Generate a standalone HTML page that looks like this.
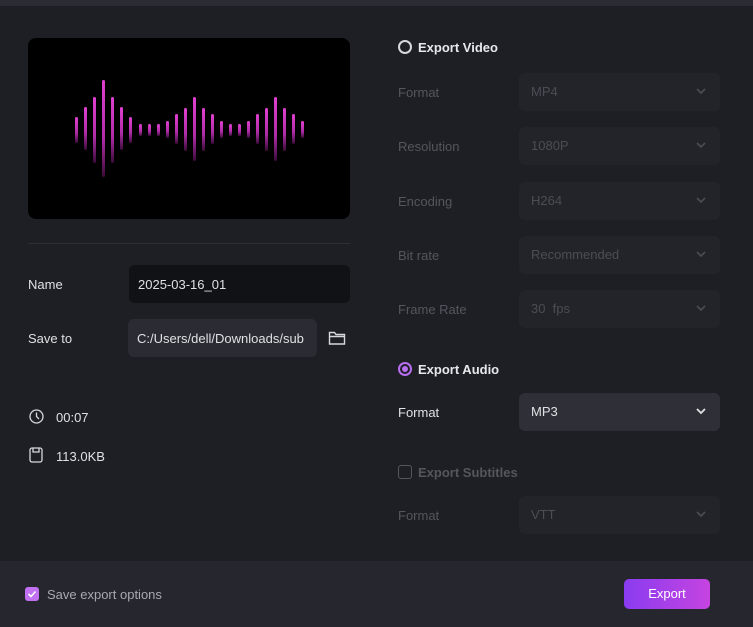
<!DOCTYPE html>
<html><head><meta charset="utf-8"><style>
*{margin:0;padding:0;box-sizing:border-box}
body{width:753px;height:627px;background:#1e1f25;font-family:"Liberation Sans",sans-serif;position:relative;overflow:hidden;color:#d8d8dc;font-size:13px}
.a{position:absolute}
.top{left:0;top:0;width:753px;height:6px;background:#2a2b33}
.prev{left:28px;top:38px;width:322px;height:181px;background:#000;border-radius:8px}
.bar{position:absolute;width:3px;border-radius:2px;background:linear-gradient(#e040d0,#b02ca8 60%,#3a0c38)}
.lbl{font-size:13px;color:#e0e0e4}
.dis{color:#55565d}
.dd{position:absolute;left:519px;width:201px;height:38px;border-radius:6px;background:#23242a;color:#4c4d54;padding:11px 12px;font-size:13px}
.dd svg{position:absolute;right:14px;top:15px}
.dd.on{background:#2f3037;color:#e0e0e4}
.radio{width:14px;height:14px;border-radius:50%;border:2px solid #d8d8dc}
.h{font-weight:bold;font-size:13px}
</style></head><body>
<div class="a top"></div>
<div class="a prev">
<div id="bars"></div>
</div>
<div class="a" style="left:28px;top:243px;width:322px;height:1px;background:#2e2f36"></div>
<div class="a lbl" style="left:28px;top:277px">Name</div>
<div class="a" style="left:129px;top:265px;width:221px;height:38px;background:#111215;border-radius:6px;padding:12px 9px;color:#e0e0e4">2025-03-16_01</div>
<div class="a lbl" style="left:28px;top:331px">Save to</div>
<div class="a" style="left:128px;top:319px;width:189px;height:38px;background:#2b2c33;border-radius:6px;padding:12px 9px;color:#e0e0e4;white-space:nowrap;overflow:hidden">C:/Users/dell/Downloads/sub</div>
<svg class="a" style="left:328px;top:330px" width="18" height="16" viewBox="0 0 18 16" fill="none" stroke="#d8d8dc" stroke-width="1.4"><path d="M1.5 2.5h5l1.5 2h8.5v9.5h-15z M1.5 6.5h15"/></svg>
<svg class="a" style="left:29px;top:409px" width="15" height="15" viewBox="0 0 15 15" fill="none" stroke="#d8d8dc" stroke-width="1.3"><circle cx="7.5" cy="7.5" r="6.5"/><path d="M7.5 3.5v4l2.5 2.5"/></svg>
<div class="a lbl" style="left:56px;top:410px">00:07</div>
<svg class="a" style="left:29px;top:447px" width="14" height="16" viewBox="0 0 14 16" fill="none" stroke="#d8d8dc" stroke-width="1.3"><rect x="1" y="1" width="12" height="14" rx="2"/><path d="M4 1v4h6V1"/></svg>
<div class="a lbl" style="left:56px;top:449px">113.0KB</div>

<div class="a radio" style="left:398px;top:40px"></div>
<div class="a h" style="left:418px;top:40px;color:#e8e8ec">Export Video</div>
<div class="a dis" style="left:398px;top:85px">Format</div>
<div class="dd" style="top:73px">MP4<svg width="10" height="7" viewBox="0 0 10 7"><path d="M1 1l4 4 4-4" stroke="#4c4d54" stroke-width="1.6" fill="none"/></svg></div>
<div class="a dis" style="left:398px;top:139px">Resolution</div>
<div class="dd" style="top:127px">1080P<svg width="10" height="7" viewBox="0 0 10 7"><path d="M1 1l4 4 4-4" stroke="#4c4d54" stroke-width="1.6" fill="none"/></svg></div>
<div class="a dis" style="left:398px;top:194px">Encoding</div>
<div class="dd" style="top:182px">H264<svg width="10" height="7" viewBox="0 0 10 7"><path d="M1 1l4 4 4-4" stroke="#4c4d54" stroke-width="1.6" fill="none"/></svg></div>
<div class="a dis" style="left:398px;top:248px">Bit rate</div>
<div class="dd" style="top:236px">Recommended<svg width="10" height="7" viewBox="0 0 10 7"><path d="M1 1l4 4 4-4" stroke="#4c4d54" stroke-width="1.6" fill="none"/></svg></div>
<div class="a dis" style="left:398px;top:302px">Frame Rate</div>
<div class="dd" style="top:290px">30&nbsp; fps<svg width="10" height="7" viewBox="0 0 10 7"><path d="M1 1l4 4 4-4" stroke="#4c4d54" stroke-width="1.6" fill="none"/></svg></div>

<div class="a radio" style="left:398px;top:362px;border-color:#b86ef0"><div style="position:absolute;left:2px;top:2px;width:6px;height:6px;border-radius:50%;background:#b86ef0"></div></div>
<div class="a h" style="left:418px;top:362px;color:#e8e8ec">Export Audio</div>
<div class="a lbl" style="left:398px;top:405px">Format</div>
<div class="dd on" style="top:393px">MP3<svg width="10" height="7" viewBox="0 0 10 7"><path d="M1 1l4 4 4-4" stroke="#e0e0e4" stroke-width="1.8" fill="none"/></svg></div>

<div class="a" style="left:398px;top:465px;width:14px;height:14px;border:1.5px solid #55565d;border-radius:3px"></div>
<div class="a h" style="left:418px;top:465px;color:#55565d">Export Subtitles</div>
<div class="a dis" style="left:398px;top:508px">Format</div>
<div class="dd" style="top:496px">VTT<svg width="10" height="7" viewBox="0 0 10 7"><path d="M1 1l4 4 4-4" stroke="#4c4d54" stroke-width="1.6" fill="none"/></svg></div>

<div class="a" style="left:0;top:561px;width:753px;height:66px;background:#26272e"></div>
<div class="a" style="left:25px;top:587px;width:14px;height:14px;border-radius:3px;background:#c070f0"><svg width="14" height="14" viewBox="0 0 14 14"><path d="M3.5 7l2.5 2.5 4.5-5" stroke="#fff" stroke-width="1.6" fill="none"/></svg></div>
<div class="a" style="left:47px;top:587px;color:#a8a8b0">Save export options</div>
<div class="a" style="left:624px;top:579px;width:86px;height:30px;border-radius:5px;background:linear-gradient(90deg,#8a3cf0,#c544e0);color:#fff;text-align:center;line-height:30px">Export</div>
<script>
var xs=[76,85,94,103,112,121,130,140,149,158,167,176,185,194,203,212,221,230,239,248,257,266,275,284,293,302];
var hs=[[117,143],[107,150],[97,163],[80,177],[97,163],[107,150],[117,143],[124,136],[124,136],[124,136],[121,138],[114,144],[108,151],[97,161],[108,151],[114,144],[121,138],[124,136],[124,136],[121,138],[114,144],[108,151],[97,161],[108,151],[114,144],[121,138]];
var b=document.getElementById('bars'),s='';
for(var i=0;i<xs.length;i++){s+='<div class="bar" style="left:'+(xs[i]-28-1)+'px;top:'+(hs[i][0]-38)+'px;height:'+(hs[i][1]-hs[i][0])+'px"></div>';}
b.innerHTML=s;
</script>
</body></html>
